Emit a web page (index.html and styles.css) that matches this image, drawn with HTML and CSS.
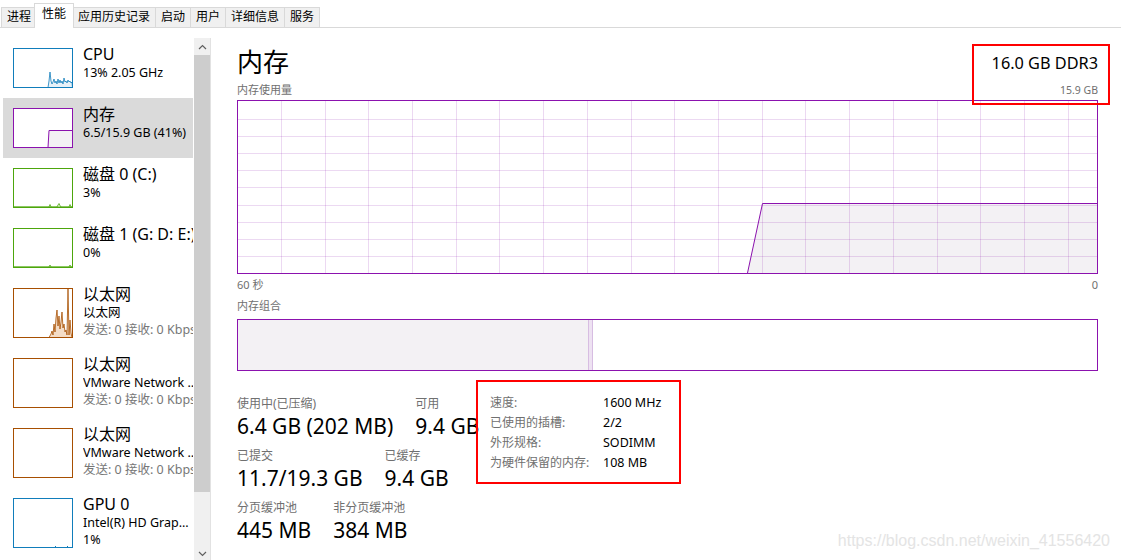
FILE: index.html
```html
<!DOCTYPE html>
<html lang="zh-CN">
<head>
<meta charset="utf-8">
<title>任务管理器 - 性能</title>
<link rel="stylesheet" href="styles.css">
</head>
<body>
<div class="window">
  <div class="tabs">
    <div class="tab">进程</div>
    <div class="tab active">性能</div>
    <div class="tab">应用历史记录</div>
    <div class="tab">启动</div>
    <div class="tab">用户</div>
    <div class="tab">详细信息</div>
    <div class="tab">服务</div>
  </div>
  <div class="content">
    <aside class="sidebar">
      <div class="list">
        <div class="item">
          <svg class="thumb" width="60" height="40" viewBox="0 0 60 40">
            <polygon points="35,39.5 36,33 37,24 38,33 39,36 40,34 41,31 42,35 43,33 44,36 45,31 46,35 47,32 48,35 49,33 50,36 51,30 52,34 53,33 54,35 55,32 56,34 57,33 58,35 59,34 59.5,39.5" fill="#e7f1f8" stroke="#117dbb" stroke-width="0.8"/>
            <rect x="0.5" y="0.5" width="59" height="39" fill="none" stroke="#117dbb"/>
          </svg>
          <div class="info"><div class="name">CPU</div><div class="sub">13% 2.05 GHz</div></div>
        </div>
        <div class="item selected">
          <svg class="thumb" width="60" height="40" viewBox="0 0 60 40">
            <rect x="0.5" y="0.5" width="59" height="39" fill="#fff"/>
            <polygon points="35,39.5 36,22.5 59.5,22.5 59.5,39.5" fill="#f3f1f4" stroke="#8b12ae" stroke-width="1"/>
            <rect x="0.5" y="0.5" width="59" height="39" fill="none" stroke="#8b12ae"/>
          </svg>
          <div class="info"><div class="name">内存</div><div class="sub">6.5/15.9 GB (41%)</div></div>
        </div>
        <div class="item">
          <svg class="thumb" width="60" height="40" viewBox="0 0 60 40">
            <polygon points="1,39 36,39 37,36.5 38,39 44,39 45,37 46,35.5 47,37.5 48,39 56,39 57,36.5 58,39 59,39" fill="#e4f2da" stroke="#4da60c" stroke-width="0.8"/>
            <rect x="0.5" y="0.5" width="59" height="39" fill="none" stroke="#4da60c"/>
          </svg>
          <div class="info"><div class="name">磁盘 0 (C:)</div><div class="sub">3%</div></div>
        </div>
        <div class="item">
          <svg class="thumb" width="60" height="40" viewBox="0 0 60 40">
            <polygon points="1,39 36,39 37,37 38,39 56,39 57,37 58,39 59,39" fill="#e4f2da" stroke="#4da60c" stroke-width="0.8"/>
            <rect x="0.5" y="0.5" width="59" height="39" fill="none" stroke="#4da60c"/>
          </svg>
          <div class="info"><div class="name">磁盘 1 (G: D: E:)</div><div class="sub">0%</div></div>
        </div>
        <div class="item">
          <svg class="thumb" width="60" height="50" viewBox="0 0 60 50">
            <polygon points="36,49.5 38,46 39,43 40,47 41,36 42,44 43,30 44,22 45,38 46,28 47,41 48,34 49,24 50,40 51,36 52,44 53,42 54,47 55,1 56,47 57,32 58,45 59,49.5" fill="#f4dcc6" stroke="#a74f01" stroke-width="0.8"/>
            <rect x="0.5" y="0.5" width="59" height="49" fill="none" stroke="#a74f01"/>
          </svg>
          <div class="info"><div class="name">以太网</div><div class="sub">以太网</div><div class="sub muted">发送: 0 接收: 0 Kbps</div></div>
        </div>
        <div class="item">
          <svg class="thumb" width="60" height="50" viewBox="0 0 60 50">
            <rect x="0.5" y="0.5" width="59" height="49" fill="none" stroke="#a74f01"/>
          </svg>
          <div class="info"><div class="name">以太网</div><div class="sub">VMware Network ...</div><div class="sub muted">发送: 0 接收: 0 Kbps</div></div>
        </div>
        <div class="item">
          <svg class="thumb" width="60" height="50" viewBox="0 0 60 50">
            <rect x="0.5" y="0.5" width="59" height="49" fill="none" stroke="#a74f01"/>
          </svg>
          <div class="info"><div class="name">以太网</div><div class="sub">VMware Network ...</div><div class="sub muted">发送: 0 接收: 0 Kbps</div></div>
        </div>
        <div class="item">
          <svg class="thumb" width="60" height="50" viewBox="0 0 60 50">
            <path d="M42.5 48 V49 M54.5 48 V49" stroke="#117dbb" stroke-width="1"/>
            <rect x="0.5" y="0.5" width="59" height="49" fill="none" stroke="#117dbb"/>
          </svg>
          <div class="info"><div class="name">GPU 0</div><div class="sub">Intel(R) HD Grap...</div><div class="sub">1%</div></div>
        </div>
      </div>
      <div class="scrollbar">
        <div class="sb-btn">
          <svg width="9" height="6" viewBox="0 0 9 6"><path d="M1 5 L4.5 1.5 L8 5" fill="none" stroke="#606060" stroke-width="1.2"/></svg>
        </div>
        <div class="sb-thumb"></div>
        <div class="sb-track"></div>
        <div class="sb-btn down">
          <svg width="9" height="6" viewBox="0 0 9 6"><path d="M1 1 L4.5 4.5 L8 1" fill="none" stroke="#606060" stroke-width="1.2"/></svg>
        </div>
      </div>
    </aside>

    <main class="main">
      <div class="head">
        <div class="title">内存</div>
        <div class="head-info">16.0 GB DDR3</div>
      </div>
      <div class="subhead">
        <div class="label">内存使用量</div>
        <div class="label small">15.9 GB</div>
      </div>
      <svg class="graph" width="861" height="174" viewBox="0 0 861 174">
        <polygon points="510.5,173 525.5,103.5 860,103.5 860,173" fill="#f3f1f4"/>
        <path d="M44.5 1V173M88.5 1V173M131.5 1V173M175.5 1V173M219.5 1V173M262.5 1V173M306.5 1V173M350.5 1V173M394.5 1V173M437.5 1V173M481.5 1V173M525.5 1V173M568.5 1V173M612.5 1V173M656.5 1V173M700.5 1V173M743.5 1V173M787.5 1V173M831.5 1V173M1 19.5H860M1 36.5H860M1 53.5H860M1 70.5H860M1 87.5H860M1 105.5H860M1 122.5H860M1 139.5H860M1 156.5H860" stroke="rgba(139,18,174,0.16)" stroke-width="1" fill="none"/>
        <polyline points="510.5,173 525.5,103.5 860,103.5" fill="none" stroke="#8b12ae" stroke-width="1"/>
        <rect x="0.5" y="0.5" width="860" height="173" fill="none" stroke="#8b12ae" stroke-width="1"/>
      </svg>
      <div class="axis">
        <span>60 秒</span>
        <span>0</span>
      </div>
      <div class="label comp-label">内存组合</div>
      <div class="comp">
        <div class="seg inuse"></div>
        <div class="seg modified"></div>
      </div>

      <div class="stats">
        <div class="stats-left">
          <div class="srow">
            <div class="stat"><div class="slabel">使用中(已压缩)</div><div class="svalue">6.4 GB (202 MB)</div></div>
            <div class="stat"><div class="slabel">可用</div><div class="svalue">9.4 GB</div></div>
          </div>
          <div class="srow">
            <div class="stat"><div class="slabel">已提交</div><div class="svalue">11.7/19.3 GB</div></div>
            <div class="stat"><div class="slabel">已缓存</div><div class="svalue">9.4 GB</div></div>
          </div>
          <div class="srow">
            <div class="stat"><div class="slabel">分页缓冲池</div><div class="svalue">445 MB</div></div>
            <div class="stat"><div class="slabel">非分页缓冲池</div><div class="svalue">384 MB</div></div>
          </div>
        </div>
        <div class="details">
          <div class="dl">速度:</div><div class="dv">1600 MHz</div>
          <div class="dl">已使用的插槽:</div><div class="dv">2/2</div>
          <div class="dl">外形规格:</div><div class="dv">SODIMM</div>
          <div class="dl">为硬件保留的内存:</div><div class="dv">108 MB</div>
        </div>
      </div>

      <div class="mark mark-top"></div>
      <div class="mark mark-details"></div>
    </main>
  </div>
  <div class="watermark">https://blog.csdn.net/weixin_41556420</div>
</div>
</body>
</html>
```

FILE: styles.css
```css
* { box-sizing: border-box; }

html, body {
  margin: 0;
  padding: 0;
  background: #fff;
}

body {
  width: 1121px;
  height: 560px;
  overflow: hidden;
  font-family: "Noto Sans", "Noto Sans CJK SC", sans-serif;
  color: #000;
}

.window {
  position: relative;
  width: 1121px;
  height: 560px;
  display: flex;
  flex-direction: column;
  overflow: hidden;
}

/* ---------- tabs ---------- */
.tabs {
  flex: none;
  height: 28px;
  display: flex;
  align-items: flex-end;
  padding-left: 1px;
  border-bottom: 1px solid #d9d9d9;
}

.tab {
  height: 20px;
  padding: 0 5px 2px;
  margin-right: -1px;
  font-size: 12px;
  line-height: 17px;
  background: #f0f0f0;
  border: 1px solid #d9d9d9;
  border-bottom: none;
  white-space: nowrap;
}

.tab.active {
  position: relative;
  z-index: 1;
  height: 25px;
  margin: 0 -2px -1px -2px;
  padding: 1px 7px 0;
  background: #fff;
}

/* ---------- layout ---------- */
.content {
  flex: 1;
  min-height: 0;
  display: flex;
}

.sidebar {
  flex: none;
  width: 211px;
  display: flex;
  padding-top: 10px;
}

.list {
  width: 194px;
  padding-left: 3px;
  overflow: hidden;
}

.item {
  width: 190px;
  display: flex;
  gap: 10px;
  padding: 10px 0 10px 10px;
}

.item.selected { background: #dadada; }

.thumb {
  flex: none;
  display: block;
}

.info {
  flex: 1;
  min-width: 0;
  margin-top: -4px;
  overflow: hidden;
  white-space: nowrap;
}

.name {
  height: 20px;
  font-size: 16px;
  line-height: 20px;
}

.sub {
  height: 17px;
  font-size: 12.5px;
  line-height: 17px;
}

.sub.muted { color: #777; }

/* ---------- scrollbar ---------- */
.scrollbar {
  width: 17px;
  display: flex;
  flex-direction: column;
  background: #f0f0f0;
  border-right: 1px solid #e2e2e2;
}

.sb-btn {
  flex: none;
  height: 17px;
  display: flex;
  align-items: center;
  justify-content: center;
}

.sb-btn svg { display: block; }

.sb-btn.down { padding-top: 4px; }

.sb-thumb {
  flex: none;
  height: 437px;
  background: #cdcdcd;
}

.sb-track { flex: 1; }

/* ---------- main ---------- */
.main {
  flex: 1;
  position: relative;
  display: flex;
  flex-direction: column;
  padding: 16px 23px 0 26px;
}

.head {
  flex: none;
  height: 36px;
  display: flex;
  justify-content: space-between;
  align-items: flex-start;
}

.title {
  height: 36px;
  font-size: 26px;
  line-height: 36px;
}

.head-info {
  font-size: 16.3px;
  line-height: 39px;
  height: 36px;
}

.subhead {
  flex: none;
  height: 16px;
  margin-top: 2px;
  display: flex;
  justify-content: space-between;
  align-items: baseline;
}

.label {
  height: 16px;
  font-size: 11px;
  line-height: 16px;
  color: #707070;
}

.label.small { font-size: 10.5px; }

.graph {
  display: block;
  margin-top: 2px;
  flex: none;
}

.axis {
  flex: none;
  height: 16px;
  margin-top: 3px;
  display: flex;
  justify-content: space-between;
  font-size: 11px;
  line-height: 16px;
  color: #707070;
}

.comp-label {
  flex: none;
  margin-top: 5px;
}

.comp {
  flex: none;
  margin-top: 5px;
  height: 52px;
  display: flex;
  border: 1px solid #8b12ae;
}

.seg { height: 100%; }

.inuse {
  width: 351px;
  background: #f3f1f4;
  border-right: 1px solid #d7bde2;
}

.modified {
  width: 4px;
  background: #eee2f2;
  border-right: 1px solid #d7bde2;
}

/* ---------- stats ---------- */
.stats {
  flex: none;
  margin-top: 22px;
  display: flex;
}

.stats-left {
  flex: none;
  width: 253px;
  padding-top: 3px;
  display: flex;
  flex-direction: column;
  gap: 8px;
}

.srow {
  display: flex;
  gap: 22px;
}

.stat { white-space: nowrap; }

.slabel {
  height: 16px;
  font-size: 12px;
  line-height: 16px;
  color: #707070;
}

.svalue {
  height: 28px;
  font-size: 21px;
  line-height: 28px;
}

.details {
  display: grid;
  grid-template-columns: 113px auto;
  grid-auto-rows: 20px;
  align-content: start;
  line-height: 20px;
  white-space: nowrap;
}

.dl {
  font-size: 12px;
  color: #707070;
}

.dv { font-size: 12.5px; }

/* ---------- red annotation boxes ---------- */
.mark {
  position: absolute;
  border: 2px solid #f00;
  pointer-events: none;
}

.mark-top {
  left: 761px;
  top: 16px;
  width: 138px;
  height: 61px;
}

.mark-details {
  left: 265px;
  top: 352px;
  width: 205px;
  height: 104px;
}

/* ---------- watermark ---------- */
.watermark {
  position: absolute;
  right: 11px;
  top: 532px;
  font-family: "Liberation Sans", Arial, sans-serif;
  font-size: 16px;
  line-height: 18px;
  color: #e4e4e4;
  white-space: nowrap;
}
```
